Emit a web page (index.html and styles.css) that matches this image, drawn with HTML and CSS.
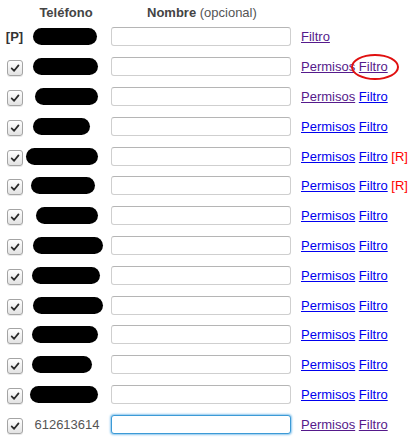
FILE: index.html
```html
<!DOCTYPE html>
<html lang="es">
<head>
  <meta charset="UTF-8">
  <title>Teléfonos</title>
  <link rel="stylesheet" href="styles.css">
</head>
<body>
  <svg class="defs" width="0" height="0">
    <symbol id="tick" viewBox="0 0 16 16">
      <path d="M4.2 8.4 L7 11.2 L12 5" fill="none" stroke="#2b2b2b" stroke-width="2" stroke-linecap="round" stroke-linejoin="round"/>
    </symbol>
  </svg>

  <table class="phones">
    <thead>
      <tr>
        <th></th>
        <th class="col-phone">Teléfono</th>
        <th class="col-name">Nombre <span class="hint">(opcional)</span></th>
        <th></th>
      </tr>
    </thead>
    <tbody>
      <tr>
        <td class="col-check"><b class="principal">[P]</b></td>
        <td class="col-phone"><span class="blob" style="margin-left:5px;width:64px"></span></td>
        <td class="col-name"><input type="text"></td>
        <td class="col-links"><a href="#filtro" class="visited">Filtro</a></td>
      </tr>
      <tr>
        <td class="col-check"><span class="check"><svg><use href="#tick"/></svg></span></td>
        <td class="col-phone"><span class="blob" style="margin-left:5px;width:65px"></span></td>
        <td class="col-name"><input type="text"></td>
        <td class="col-links"><a href="#permisos" class="visited">Permisos</a> <span class="circled"><a href="#filtro" class="visited">Filtro</a></span></td>
      </tr>
      <tr>
        <td class="col-check"><span class="check"><svg><use href="#tick"/></svg></span></td>
        <td class="col-phone"><span class="blob" style="margin-left:7px;width:63px"></span></td>
        <td class="col-name"><input type="text"></td>
        <td class="col-links"><a href="#permisos" class="visited">Permisos</a> <a href="#filtro">Filtro</a></td>
      </tr>
      <tr>
        <td class="col-check"><span class="check"><svg><use href="#tick"/></svg></span></td>
        <td class="col-phone"><span class="blob" style="margin-left:5px;width:57px"></span></td>
        <td class="col-name"><input type="text"></td>
        <td class="col-links"><a href="#permisos">Permisos</a> <a href="#filtro">Filtro</a></td>
      </tr>
      <tr>
        <td class="col-check"><span class="check"><svg><use href="#tick"/></svg></span></td>
        <td class="col-phone"><span class="blob" style="margin-left:-2px;width:72px"></span></td>
        <td class="col-name"><input type="text"></td>
        <td class="col-links"><a href="#permisos">Permisos</a> <a href="#filtro">Filtro</a> <span class="flag">[R]</span></td>
      </tr>
      <tr>
        <td class="col-check"><span class="check"><svg><use href="#tick"/></svg></span></td>
        <td class="col-phone"><span class="blob" style="margin-left:3px;width:64px"></span></td>
        <td class="col-name"><input type="text"></td>
        <td class="col-links"><a href="#permisos">Permisos</a> <a href="#filtro">Filtro</a> <span class="flag">[R]</span></td>
      </tr>
      <tr>
        <td class="col-check"><span class="check"><svg><use href="#tick"/></svg></span></td>
        <td class="col-phone"><span class="blob" style="margin-left:8px;width:62px"></span></td>
        <td class="col-name"><input type="text"></td>
        <td class="col-links"><a href="#permisos">Permisos</a> <a href="#filtro">Filtro</a></td>
      </tr>
      <tr>
        <td class="col-check"><span class="check"><svg><use href="#tick"/></svg></span></td>
        <td class="col-phone"><span class="blob" style="margin-left:5px;width:70px"></span></td>
        <td class="col-name"><input type="text"></td>
        <td class="col-links"><a href="#permisos">Permisos</a> <a href="#filtro">Filtro</a></td>
      </tr>
      <tr>
        <td class="col-check"><span class="check"><svg><use href="#tick"/></svg></span></td>
        <td class="col-phone"><span class="blob" style="margin-left:4px;width:68px"></span></td>
        <td class="col-name"><input type="text"></td>
        <td class="col-links"><a href="#permisos">Permisos</a> <a href="#filtro">Filtro</a></td>
      </tr>
      <tr>
        <td class="col-check"><span class="check"><svg><use href="#tick"/></svg></span></td>
        <td class="col-phone"><span class="blob" style="margin-left:5px;width:70px"></span></td>
        <td class="col-name"><input type="text"></td>
        <td class="col-links"><a href="#permisos">Permisos</a> <a href="#filtro">Filtro</a></td>
      </tr>
      <tr>
        <td class="col-check"><span class="check"><svg><use href="#tick"/></svg></span></td>
        <td class="col-phone"><span class="blob" style="margin-left:4px;width:66px"></span></td>
        <td class="col-name"><input type="text"></td>
        <td class="col-links"><a href="#permisos">Permisos</a> <a href="#filtro">Filtro</a></td>
      </tr>
      <tr>
        <td class="col-check"><span class="check"><svg><use href="#tick"/></svg></span></td>
        <td class="col-phone"><span class="blob" style="margin-left:4px;width:60px"></span></td>
        <td class="col-name"><input type="text"></td>
        <td class="col-links"><a href="#permisos">Permisos</a> <a href="#filtro">Filtro</a></td>
      </tr>
      <tr>
        <td class="col-check"><span class="check"><svg><use href="#tick"/></svg></span></td>
        <td class="col-phone"><span class="blob" style="margin-left:2px;width:68px"></span></td>
        <td class="col-name"><input type="text"></td>
        <td class="col-links"><a href="#permisos">Permisos</a> <a href="#filtro">Filtro</a></td>
      </tr>
      <tr>
        <td class="col-check"><span class="check"><svg><use href="#tick"/></svg></span></td>
        <td class="col-phone number">612613614</td>
        <td class="col-name"><input type="text" class="focused" autofocus></td>
        <td class="col-links"><a href="#permisos" class="visited">Permisos</a> <a href="#filtro" class="visited">Filtro</a></td>
      </tr>
    </tbody>
  </table>
</body>
</html>
```

FILE: styles.css
```css
* {
  box-sizing: border-box;
}

body {
  margin: 0;
  background: #fff;
  font-family: "Liberation Sans", Arial, sans-serif;
  font-size: 13px;
  color: #333;
}

.defs {
  position: absolute;
  width: 0;
  height: 0;
}

.phones {
  border-collapse: collapse;
  border-spacing: 0;
}

.phones td,
.phones th {
  padding: 0;
  vertical-align: middle;
}

/* cabecera */
.phones thead tr {
  height: 22px;
}

.phones th {
  font-weight: bold;
  color: #444;
  text-align: left;
  padding-top: 2px;
}

.phones th.col-phone {
  text-align: center;
}

.phones th.col-name {
  padding-left: 43px;
}

.hint {
  font-weight: normal;
  color: #555;
}

/* filas */
.phones tbody tr {
  height: 29.8px;
}

.col-check {
  width: 28px;
  text-align: center;
}

.col-phone {
  width: 76px;
}

.phones td.col-name {
  padding: 0 10px 0 7px;
}

.col-links {
  white-space: nowrap;
}

.principal {
  display: inline-block;
  margin-left: 1px;
  color: #333;
}

.check {
  display: inline-block;
  width: 16px;
  height: 16px;
  margin: 3px 0 0 2px;
  border: 1px solid #a4a4a4;
  border-radius: 3px;
  background: linear-gradient(#ffffff, #e3e3e3);
  box-shadow: 0 1px 0 #e8e8e8;
  vertical-align: middle;
}

.check svg {
  display: block;
  width: 14px;
  height: 14px;
}

.blob {
  display: block;
  height: 17px;
  border-radius: 9px;
  background: #000;
}

.phones td.number {
  text-align: center;
  color: #555;
  padding-left: 2px;
}

input {
  display: block;
  width: 180px;
  height: 19px;
  padding: 0 3px;
  border: 1px solid #cfcfcf;
  border-top-color: #b5b5b5;
  border-radius: 3px;
  font: inherit;
  outline: none;
  background: #fff;
}

input.focused {
  border: 1px solid #3c9ad6;
  box-shadow: 0 0 2px 1px #8cc7ee;
}

a {
  color: #0000ee;
  text-decoration: underline;
}

a.visited {
  color: #551a8b;
}

.flag {
  color: #ff0000;
}

/* marca roja sobre el enlace */
.circled {
  position: relative;
}

.circled::after {
  content: "";
  position: absolute;
  left: -8px;
  right: -11px;
  top: -5px;
  bottom: -6px;
  border: 2px solid #e01010;
  border-radius: 50%;
}
```
